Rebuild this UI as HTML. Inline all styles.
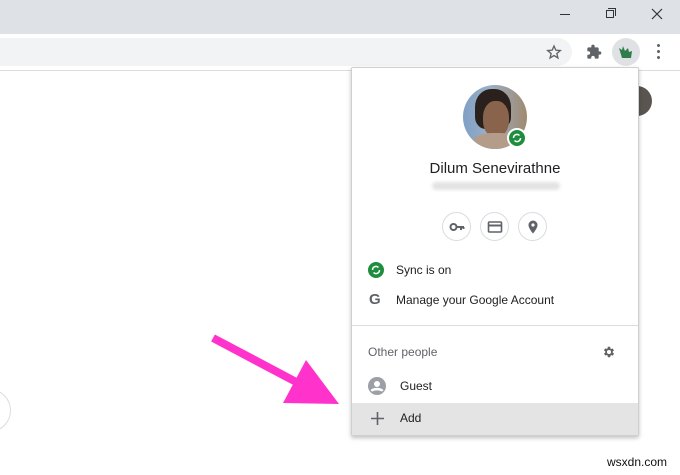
<!DOCTYPE html>
<html><head><meta charset="utf-8"><style>
*{margin:0;padding:0;box-sizing:border-box}
body{width:680px;height:475px;overflow:hidden;background:#fff;font-family:"Liberation Sans",sans-serif;position:relative;color:#202124}
.abs{position:absolute}
</style></head><body>
<div class="abs" style="left:0;top:0;width:680px;height:34px;background:#dee1e6"></div>
<div class="abs" style="left:0;top:34px;width:680px;height:37px;background:#fff;border-bottom:1px solid #dadce0"></div>
<div class="abs" style="left:-20px;top:38px;width:592px;height:28px;background:#f1f3f4;border-radius:14px"></div>
<div class="abs" style="left:560px;top:14px;width:10px;height:1px;background:#333"></div>
<div class="abs" style="left:606px;top:10px;width:8px;height:8px;border:1px solid #333"></div>
<div class="abs" style="left:608px;top:8px;width:8px;height:8px;border-top:1px solid #333;border-right:1px solid #333"></div>
<svg class="abs" style="left:651px;top:8px" width="12" height="12"><path d="M1 1L11 11M11 1L1 11" stroke="#333" stroke-width="1.2"/></svg>
<svg class="abs" style="left:546px;top:44px" width="16" height="16" viewBox="0 0 24 24"><path d="M12 3l2.7 6.2 6.8.6-5.2 4.5 1.6 6.6L12 17.3 6.1 20.9l1.6-6.6L2.5 9.8l6.8-.6z" fill="none" stroke="#5f6368" stroke-width="2"/></svg>
<svg class="abs" style="left:586px;top:44px" width="16" height="16" viewBox="0 0 24 24"><path d="M20.5 11H19V7a2 2 0 0 0-2-2h-4V3.5a2.5 2.5 0 0 0-5 0V5H4a2 2 0 0 0-2 2v3.8h1.5a2.7 2.7 0 0 1 0 5.4H2V20a2 2 0 0 0 2 2h3.8v-1.5a2.7 2.7 0 0 1 5.4 0V22H17a2 2 0 0 0 2-2v-4h1.5a2.5 2.5 0 0 0 0-5z" fill="#5f6368"/></svg>
<div class="abs" style="left:612px;top:38px;width:28px;height:28px;border-radius:50%;background:#dfe1e5"></div>
<svg class="abs" style="left:618px;top:44px" width="16" height="16" viewBox="0 0 16 16"><path d="M1 4l3 2 1-4 2 5 3-3 1 4 3-1-1 7H4z" fill="#2f7d4a"/></svg>
<div class="abs" style="left:657px;top:44px;width:3px;height:3px;border-radius:50%;background:#5f6368;box-shadow:0 6px 0 #5f6368,0 12px 0 #5f6368"></div>
<div class="abs" style="left:622px;top:86px;width:30px;height:30px;border-radius:50%;background:#5a5550"></div>
<div class="abs" style="left:-32px;top:389px;width:43px;height:43px;border-radius:50%;border:1px solid #ddd"></div>
<div class="abs" style="left:351px;top:67px;width:288px;height:369px;background:#fff;border:1px solid #cfcfcf;box-shadow:0 2px 4px rgba(0,0,0,.25);border-radius:2px">
 <div class="abs" style="left:111px;top:17px;width:64px;height:64px;border-radius:50%;overflow:hidden;background:linear-gradient(90deg,#7f9fc4,#9ab0c8 40%,#a08a70)">
  <div class="abs" style="left:12px;top:4px;width:36px;height:40px;border-radius:45% 45% 30% 30%;background:#2a211c"></div>
  <div class="abs" style="left:20px;top:16px;width:26px;height:36px;border-radius:45%;background:#8a634d"></div>
  <div class="abs" style="left:8px;top:48px;width:50px;height:30px;border-radius:40%;background:#b39c8a"></div>
 </div>
 <div class="abs" style="left:155px;top:60px;width:20px;height:20px;border-radius:50%;background:#1e8e3e;border:2px solid #fff"></div>
 <svg class="abs" style="left:159px;top:64px" width="12" height="12" viewBox="0 0 12 12"><path d="M2.5 6a3.5 3.5 0 0 1 6-2.5M9.5 6a3.5 3.5 0 0 1-6 2.5" stroke="#fff" stroke-width="1.5" fill="none"/></svg>
 <div class="abs" style="left:0;top:92px;width:286px;text-align:center;font-size:15px;color:#202124">Dilum Senevirathne</div>
 <div class="abs" style="left:80px;top:114px;width:128px;height:8px;background:#e3e3e3;border-radius:4px;filter:blur(1.5px)"></div>
 <div class="abs" style="left:90px;top:144px;width:29px;height:29px;border-radius:50%;border:1px solid #dadce0"></div>
 <div class="abs" style="left:128px;top:144px;width:29px;height:29px;border-radius:50%;border:1px solid #dadce0"></div>
 <div class="abs" style="left:166px;top:144px;width:29px;height:29px;border-radius:50%;border:1px solid #dadce0"></div>
 <svg class="abs" style="left:97px;top:151px" width="16" height="16" viewBox="0 0 16 16"><circle cx="4.5" cy="8" r="3" fill="none" stroke="#5f6368" stroke-width="2"/><path d="M7 8h8M12 8v3M14.5 8v2" stroke="#5f6368" stroke-width="2"/></svg>
 <svg class="abs" style="left:135px;top:151px" width="16" height="16" viewBox="0 0 16 16"><rect x="1.5" y="3" width="13" height="10" rx="1" fill="none" stroke="#5f6368" stroke-width="1.6"/><path d="M1.5 6.5h13" stroke="#5f6368" stroke-width="2"/></svg>
 <svg class="abs" style="left:173px;top:151px" width="16" height="16" viewBox="0 0 16 16"><path d="M8 1.5a4.5 4.5 0 0 0-4.5 4.5c0 3.4 4.5 8.5 4.5 8.5s4.5-5.1 4.5-8.5A4.5 4.5 0 0 0 8 1.5z" fill="#5f6368"/><circle cx="8" cy="6" r="1.6" fill="#fff"/></svg>
 <div class="abs" style="left:16px;top:194px;width:16px;height:16px;border-radius:50%;background:#1e8e3e"></div>
 <svg class="abs" style="left:18px;top:196px" width="12" height="12" viewBox="0 0 12 12"><path d="M2.5 6a3.5 3.5 0 0 1 6-2.5M9.5 6a3.5 3.5 0 0 1-6 2.5" stroke="#fff" stroke-width="1.5" fill="none"/></svg>
 <div class="abs" style="left:44px;top:195px;font-size:12px">Sync is on</div>
 <div class="abs" style="left:17px;top:223px;font-size:15px;font-weight:bold;color:#5f6368">G</div>
 <div class="abs" style="left:44px;top:225px;font-size:12px">Manage your Google Account</div>
 <div class="abs" style="left:0;top:257px;width:286px;height:1px;background:#dadce0"></div>
 <div class="abs" style="left:16px;top:277px;font-size:12px;color:#5f6368">Other people</div>
 <svg class="abs" style="left:250px;top:277px" width="14" height="14" viewBox="0 0 24 24"><path d="M19.4 13a7.7 7.7 0 0 0 0-2l2.1-1.6-2-3.5-2.5 1a7.5 7.5 0 0 0-1.7-1L15 3h-4l-.4 2.7a7.5 7.5 0 0 0-1.7 1l-2.5-1-2 3.5L6.6 11a7.7 7.7 0 0 0 0 2l-2.1 1.6 2 3.5 2.5-1a7.5 7.5 0 0 0 1.7 1L11 21h4l.4-2.7a7.5 7.5 0 0 0 1.7-1l2.5 1 2-3.5zM13 15.5a3.5 3.5 0 1 1 0-7 3.5 3.5 0 0 1 0 7z" fill="#5f6368" transform="translate(-1 0)"/></svg>
 <svg class="abs" style="left:16px;top:309px" width="18" height="18" viewBox="0 0 18 18"><circle cx="9" cy="9" r="9" fill="#9aa0a6"/><circle cx="9" cy="7" r="3" fill="#fff"/><path d="M3.5 14c1.5-2.5 9.5-2.5 11 0" stroke="#fff" stroke-width="2.4" fill="none"/></svg>
 <div class="abs" style="left:48px;top:311px;font-size:12px">Guest</div>
 <div class="abs" style="left:0;top:335px;width:286px;height:32px;background:#e4e4e4"></div>
 <svg class="abs" style="left:19px;top:344px" width="13" height="13"><path d="M6.5 0v13M0 6.5h13" stroke="#5f6368" stroke-width="1.6"/></svg>
 <div class="abs" style="left:48px;top:343px;font-size:12px">Add</div>
</div>
<svg class="abs" style="left:0;top:0" width="680" height="475"><path d="M213 338L300 384" stroke="#ff33cc" stroke-width="8"/><path d="M306 360L339 404L283 403z" fill="#ff33cc"/></svg>
<div class="abs" style="left:607px;top:455px;font-size:12px;color:#111">wsxdn.com</div>
</body></html>
